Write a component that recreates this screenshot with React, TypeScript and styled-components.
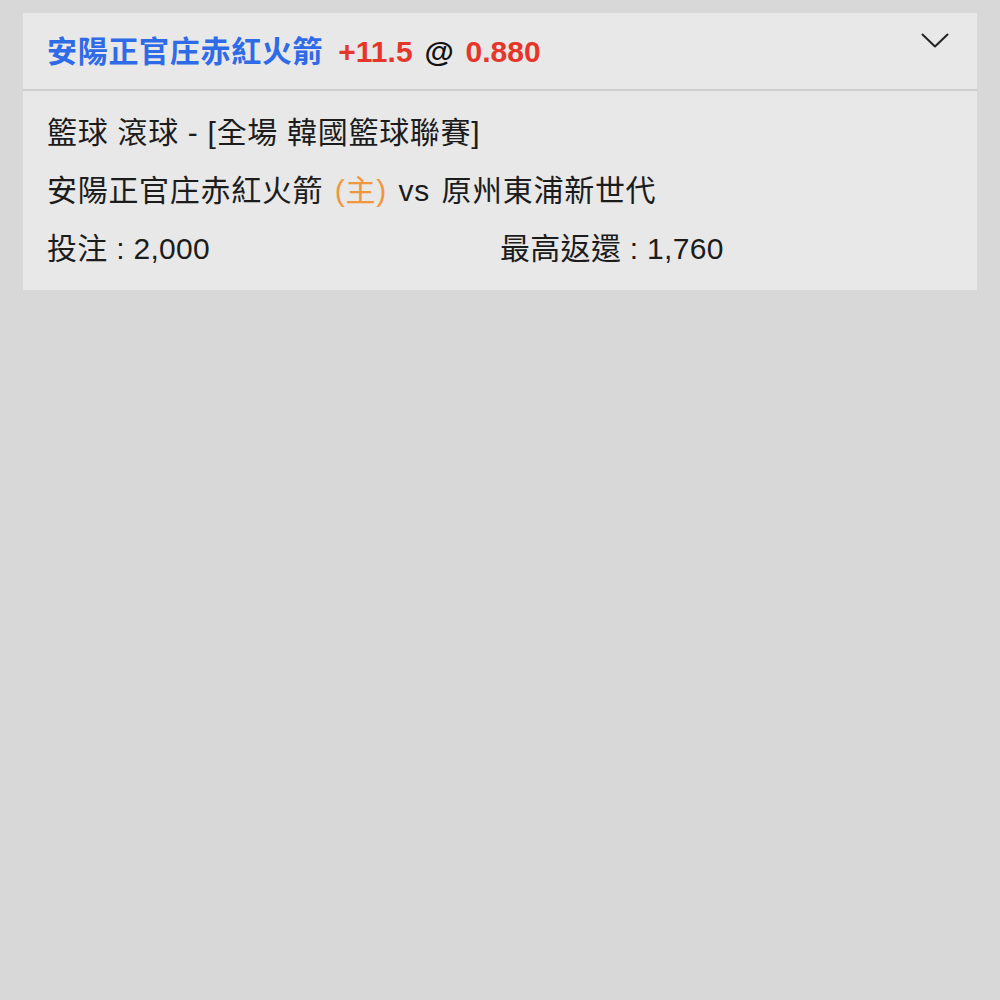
import React from "react";
import styled, { createGlobalStyle } from "styled-components";

const Global = createGlobalStyle`
  html, body { margin: 0; padding: 0; background: #d8d8d8; }
  body { font-family: "Liberation Sans", "Noto Sans CJK TC", sans-serif; }
`;

const Page = styled.div`
  min-height: 1000px;
  padding: 13px 23px 0 23px;
  box-sizing: border-box;
  background: #d8d8d8;
`;

const Card = styled.div`
  background: #e8e8e8;
  display: flex;
  flex-direction: column;
`;

const Header = styled.div`
  height: 78px;
  box-sizing: border-box;
  display: flex;
  align-items: center;
  justify-content: space-between;
  padding: 0 28px 4px 24px;
  border-bottom: 2px solid #cfcfcf;
`;

const Title = styled.div`
  font-size: 30px;
  font-weight: 700;
  display: flex;
  align-items: baseline;
  gap: 15px;
  white-space: nowrap;
`;

const TeamName = styled.span`
  color: #2f6be6;
  letter-spacing: 0.7px;
`;

const Odds = styled.span`
  word-spacing: 3.5px;
`;

const Colored = styled.span<{ $c: string }>`
  color: ${(p) => p.$c};
`;

const ChevronBox = styled.div`
  align-self: flex-start;
  margin-top: 20px;
  display: flex;
`;

const Body = styled.div`
  padding: 13px 24px 12px 24px;
  display: flex;
  flex-direction: column;
`;

const Line = styled.div<{ $ws: number }>`
  font-size: 30px;
  line-height: 58px;
  letter-spacing: 0.7px;
  word-spacing: ${(p) => p.$ws}px;
  color: #1c1c1c;
  white-space: nowrap;
`;

const Grid = styled.div`
  display: grid;
  grid-template-columns: 1fr 1fr;
  font-size: 30px;
  line-height: 58px;
  letter-spacing: 0.3px;
  color: #1c1c1c;
`;

const Chevron = () => (
  <svg width="28" height="16" viewBox="0 0 28 16" fill="none">
    <path d="M1.5 1.5 L14 13.5 L26.5 1.5" stroke="#222" strokeWidth="2" strokeLinecap="round" strokeLinejoin="round" />
  </svg>
);

export default function App() {
  return (
    <>
      <Global />
      <Page>
        <Card>
          <Header>
            <Title>
              <TeamName>安陽正官庄赤紅火箭</TeamName>
              <Odds>
                <Colored $c="#e5362a">+11.5</Colored>{" "}
                <Colored $c="#111">@</Colored>{" "}
                <Colored $c="#e5362a">0.880</Colored>
              </Odds>
            </Title>
            <ChevronBox>
              <Chevron />
            </ChevronBox>
          </Header>
          <Body>
            <Line $ws={0}>籃球 滾球 - [全場 韓國籃球聯賽]</Line>
            <Line $ws={2.5}>
              安陽正官庄赤紅火箭 <Colored $c="#f0963c">(主)</Colored> vs 原州東浦新世代
            </Line>
            <Grid>
              <span>投注 : 2,000</span>
              <span>最高返還 : 1,760</span>
            </Grid>
          </Body>
        </Card>
      </Page>
    </>
  );
}
